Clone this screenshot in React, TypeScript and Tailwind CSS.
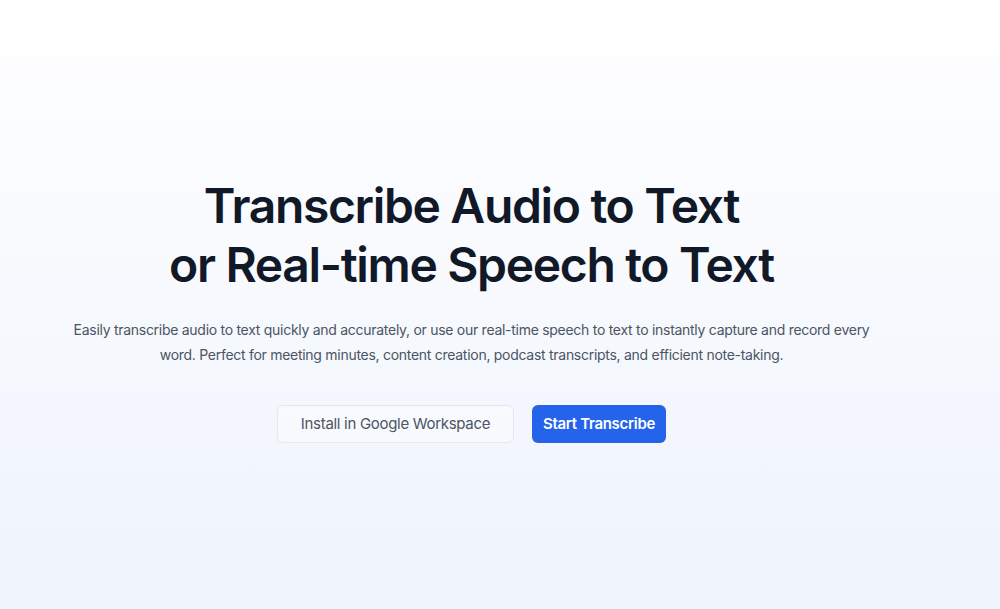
import React from 'react';

export default function App() {
  return (
    <div
      className="min-h-[609px] w-full bg-gradient-to-b from-white to-[#eef3fc]"
      style={{ fontFamily: 'Inter, "Noto Sans", sans-serif' }}
    >
      <section className="flex w-[943px] flex-col items-center pt-[176px] text-center">
        <h1 className="text-[48px] font-semibold leading-[59px] tracking-[-0.028em] text-[#111827]">
          Transcribe Audio to Text
          <br />
          or Real-time Speech to Text
        </h1>
        <p className="mt-[23px] max-w-[800px] text-[14px] leading-[25px] tracking-[-0.02em] text-[#4b5563]">
          Easily transcribe audio to text quickly and accurately, or use our real-time speech to text to instantly capture and record every word. Perfect for meeting minutes, content creation, podcast transcripts, and efficient note-taking.
        </p>
        <div className="mt-[38px] flex items-center gap-[18px]">
          <button className="h-[38px] w-[237px] rounded-md border border-[#e5e7eb] bg-white/40 text-[15px] tracking-[-0.02em] text-[#4b5563]">
            Install in Google Workspace
          </button>
          <button className="h-[38px] w-[134px] rounded-md bg-[#2563eb] text-[15px] font-semibold tracking-[-0.02em] text-white">
            Start Transcribe
          </button>
        </div>
      </section>
    </div>
  );
}
